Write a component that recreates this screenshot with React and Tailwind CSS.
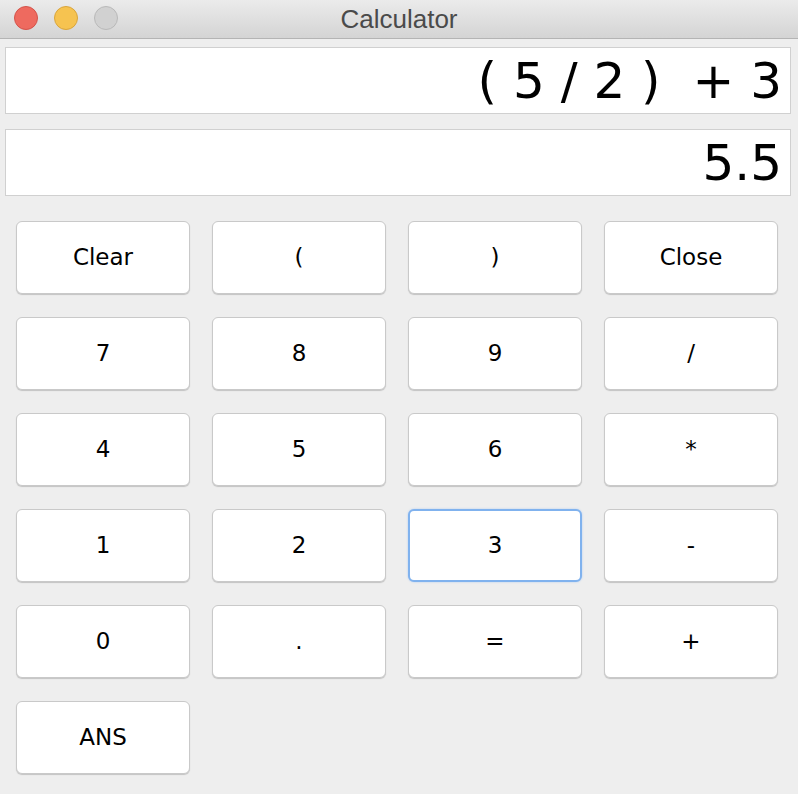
const keys = [
  "Clear", "(", ")", "Close",
  "7", "8", "9", "/",
  "4", "5", "6", "*",
  "1", "2", "3", "-",
  "0", ".", "=", "+",
  "ANS",
];

function TitleBar() {
  return (
    <div className="relative h-[39px] border-b border-[#b4b4b4] bg-gradient-to-b from-[#ebebeb] to-[#d4d4d4] flex items-center justify-center">
      <div className="absolute left-[14px] top-[6px] flex gap-[16px]">
        <span className="w-[24px] h-[24px] rounded-full bg-[#ee6a5f] border border-[#d4534a]" />
        <span className="w-[24px] h-[24px] rounded-full bg-[#f6c350] border border-[#d9a53c]" />
        <span className="w-[24px] h-[24px] rounded-full bg-[#d1d1d1] border border-[#b9b9b9]" />
      </div>
      <span className="text-[26px] text-[#4a4a4a] font-['Liberation_Sans',sans-serif] leading-none">
        Calculator
      </span>
    </div>
  );
}

function Field({ value }) {
  return (
    <div className="ml-[5px] w-[786px] h-[67px] bg-white border border-[#d0d0d0] flex items-center justify-end pr-[8px] font-['DejaVu_Sans',sans-serif] text-[50px] leading-none text-black">
      <span className="whitespace-pre">{value}</span>
    </div>
  );
}

export default function App() {
  return (
    <div className="w-[798px] h-[794px] bg-[#eeeeee] overflow-hidden">
      <TitleBar />
      <div className="pt-[8px] flex flex-col gap-[15px]">
        <Field value="( 5 / 2 )  + 3" />
        <Field value="5.5" />
      </div>
      <div className="mt-[25px] ml-[16px] grid grid-cols-[repeat(4,174px)] auto-rows-[73px] gap-x-[22px] gap-y-[23px]">
        {keys.map((k) => (
          <button
            key={k}
            className={
              k === "3"
                ? "rounded-[6px] bg-white border-2 border-[#80b2ee] shadow-[0_0_2px_#a9c9f3] text-[23px] text-black font-['DejaVu_Sans',sans-serif]"
                : "rounded-[6px] bg-white border border-[#c9c9c9] shadow-[0_1px_1px_rgba(0,0,0,0.18)] text-[23px] text-black font-['DejaVu_Sans',sans-serif]"
            }
          >
            {k}
          </button>
        ))}
      </div>
    </div>
  );
}
